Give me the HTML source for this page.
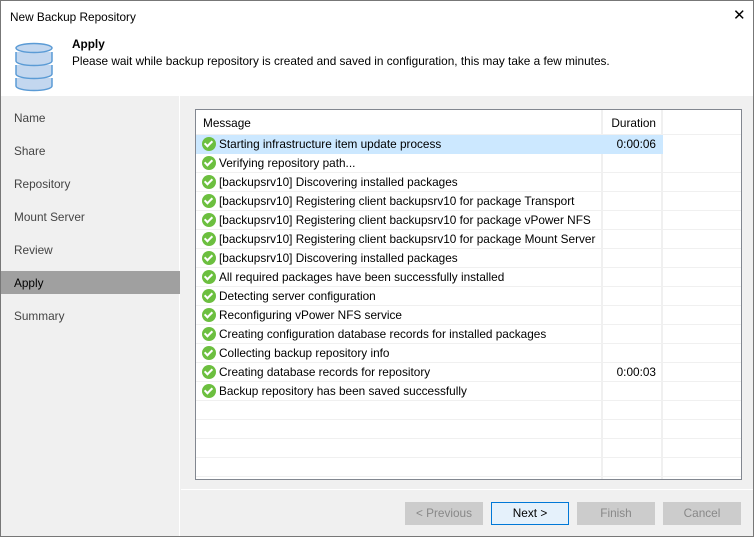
<!DOCTYPE html>
<html><head><style>
*{margin:0;padding:0;box-sizing:border-box}
body{width:754px;height:537px;font-family:"Liberation Sans",sans-serif;font-size:11.8px;color:#000;background:#fff;position:relative;overflow:hidden}
.win{position:absolute;left:0;top:0;width:754px;height:537px;border:1px solid #777;background:#f0f0f0}
.title{position:absolute;left:0;top:0;width:752px;height:95px;background:#fff}
.t{position:absolute;left:9px;top:9px}
.x{position:absolute;left:732px;top:5px;font-size:15px;font-weight:300}
.nav{position:absolute;left:0;top:95px;width:179px;height:440px;background:#f0f0f0;border-right:1px solid #fff}
.nav .it{position:absolute;left:13px;color:#444}
.sel{position:absolute;left:0;top:175px;width:179px;height:23px;background:#a0a0a0}
.tbl{position:absolute;left:194px;top:108px;width:547px;height:371px;border:1px solid #828790;background:#fff}
.row{position:absolute;left:0;width:545px;height:19px;border-bottom:1px solid #f0f0f0;white-space:nowrap}
.row span.m{position:absolute;left:23px;top:2px}
.row span.d{position:absolute;left:410px;width:50px;text-align:right;top:2px}
.ck{position:absolute;left:6px;top:2px;width:14px;height:14px;border-radius:50%;background:#6cbf3f}
.ck:after{content:"";position:absolute;left:4px;top:2px;width:3px;height:6px;border:solid #fff;border-width:0 2px 2px 0;transform:rotate(45deg)}
.vl{position:absolute;top:0;width:2px;height:369px;background:#f0f0f0}
.btn{position:absolute;top:501px;width:78px;height:23px;border:1px solid #ccc;background:#ccc;color:#888;text-align:center;line-height:21px}
</style></head><body>
<div class="win">
<div class="title">
<div class="t">New Backup Repository</div>
<div class="x">✕</div>
<svg style="position:absolute;left:13px;top:41px" width="40" height="50" viewBox="0 0 40 50">
<g fill="#c3d7ef" stroke="#5b9bd5" stroke-width="1.5">
<path d="M2 36v8c0 2.5 8 4.5 18 4.5s18-2 18-4.5v-8"/>
<path d="M2 23v9c0 2.5 8 4.5 18 4.5s18-2 18-4.5v-9"/>
<path d="M2 10v9c0 2.5 8 4.5 18 4.5s18-2 18-4.5v-9"/>
<ellipse cx="20" cy="6" rx="18" ry="4.5"/>
</g></svg>
<div style="position:absolute;left:71px;top:36px;font-weight:bold">Apply</div>
<div style="position:absolute;left:71px;top:53px">Please wait while backup repository is created and saved in configuration, this may take a few minutes.</div>
</div>
<div class="nav">
<div class="it" style="top:15px">Name</div>
<div class="it" style="top:48px">Share</div>
<div class="it" style="top:81px">Repository</div>
<div class="it" style="top:114px">Mount Server</div>
<div class="it" style="top:147px">Review</div>
<div class="sel"></div>
<div class="it" style="top:180px;color:#000">Apply</div>
<div class="it" style="top:213px">Summary</div>
</div>
<div class="tbl">
<div class="vl" style="left:405px"></div>
<div class="vl" style="left:465px"></div>
<div class="row" style="top:0;height:25px"><span class="m" style="left:7px;top:6px">Message</span><span class="d" style="top:6px">Duration</span></div>
<div class="row" style="top:25px;background:#cce8ff;width:467px;border-bottom:none"><div class="ck"></div><span class="m">Starting infrastructure item update process</span><span class="d">0:00:06</span></div>
<div class="row" style="top:44px"><div class="ck"></div><span class="m">Verifying repository path...</span></div>
<div class="row" style="top:63px"><div class="ck"></div><span class="m">[backupsrv10] Discovering installed packages</span></div>
<div class="row" style="top:82px"><div class="ck"></div><span class="m">[backupsrv10] Registering client backupsrv10 for package Transport</span></div>
<div class="row" style="top:101px"><div class="ck"></div><span class="m">[backupsrv10] Registering client backupsrv10 for package vPower NFS</span></div>
<div class="row" style="top:120px"><div class="ck"></div><span class="m">[backupsrv10] Registering client backupsrv10 for package Mount Server</span></div>
<div class="row" style="top:139px"><div class="ck"></div><span class="m">[backupsrv10] Discovering installed packages</span></div>
<div class="row" style="top:158px"><div class="ck"></div><span class="m">All required packages have been successfully installed</span></div>
<div class="row" style="top:177px"><div class="ck"></div><span class="m">Detecting server configuration</span></div>
<div class="row" style="top:196px"><div class="ck"></div><span class="m">Reconfiguring vPower NFS service</span></div>
<div class="row" style="top:215px"><div class="ck"></div><span class="m">Creating configuration database records for installed packages</span></div>
<div class="row" style="top:234px"><div class="ck"></div><span class="m">Collecting backup repository info</span></div>
<div class="row" style="top:253px"><div class="ck"></div><span class="m">Creating database records for repository</span><span class="d">0:00:03</span></div>
<div class="row" style="top:272px"><div class="ck"></div><span class="m">Backup repository has been saved successfully</span></div>
<div class="row" style="top:291px"></div>
<div class="row" style="top:310px"></div>
<div class="row" style="top:329px"></div>
<div class="row" style="top:348px"></div>
</div>
<div style="position:absolute;left:180px;top:488px;width:572px;height:1px;background:#fff"></div>
<div class="btn" style="left:404px">&lt; Previous</div>
<div class="btn" style="left:490px;background:#e5f1fb;border-color:#0078d7;color:#000">Next &gt;</div>
<div class="btn" style="left:576px">Finish</div>
<div class="btn" style="left:662px">Cancel</div>
</div>
</body></html>
